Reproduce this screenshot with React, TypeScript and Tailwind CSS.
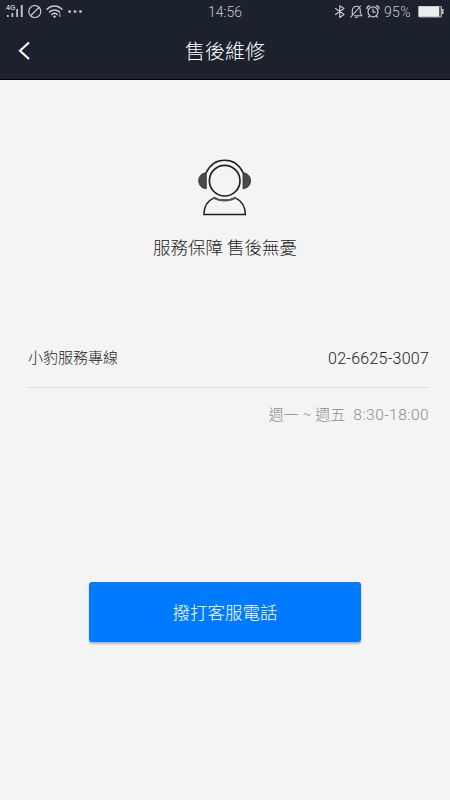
import type { ReactNode } from "react";

interface IconProps {
  className?: string;
  children?: ReactNode;
}

function Icon({ className, viewBox, children }: IconProps & { viewBox: string }) {
  return (
    <svg
      viewBox={viewBox}
      className={className}
      fill="none"
      stroke="currentColor"
      strokeLinecap="round"
      strokeLinejoin="round"
    >
      {children}
    </svg>
  );
}

function StatusBar() {
  return (
    <div className="grid h-6 grid-cols-3 items-center px-1.5 text-[#c6c8cc]">
      <div className="flex items-center">
        <div className="relative h-3.5 w-[17px]">
          <span className="absolute -top-px left-0 font-['Liberation_Sans'] text-[7px] leading-[8px] font-bold">
            4G
          </span>
          <svg viewBox="0 0 17 14" className="h-3.5 w-[17px]" fill="currentColor">
            <path d="M1 10h1.7v2H1zM5.5 8h1.7v4H5.5zM10.3 4h1.7v8h-1.7zM14.8 0h1.9v12h-1.9z" />
          </svg>
        </div>
        <Icon viewBox="0 0 14 14" className="ml-[5px] size-3.5">
          <circle cx="6.8" cy="6.5" r="6" strokeWidth="1.2" />
          <path d="M2.8 10.5 10.8 2.5" strokeWidth="1.2" />
        </Icon>
        <Icon viewBox="0 0 17 14" className="ml-[4px] h-3.5 w-[17px]">
          <path d="M1 4.2C5.2 0 11.8 0 16 4.2M3.6 6.9c2.8-2.7 7-2.7 9.8 0M6 9.4c1.4-1.4 3.6-1.4 5 0" strokeWidth="1.5" />
          <circle cx="8.5" cy="11.6" r=".8" fill="currentColor" />
          <path d="M13.8 9v2.6" strokeWidth="1" />
        </Icon>
        <svg viewBox="0 0 16 4" className="ml-[5px] h-1 w-4" fill="currentColor">
          <circle cx="1.6" cy="1.6" r="1.4" />
          <circle cx="7" cy="1.6" r="1.4" />
          <circle cx="12.5" cy="1.6" r="1.4" />
        </svg>
      </div>

      <span className="text-center font-[Roboto] text-[14px] leading-6 font-light">14:56</span>

      <div className="flex items-center justify-end">
        <Icon viewBox="0 0 12 14" className="h-3.5 w-3">
          <path d="m1.5 3.5 8.5 6-4.3 3V.7L10 3.5l-8.5 6" strokeWidth="1.1" />
        </Icon>
        <Icon viewBox="0 0 13 14" className="ml-1 h-3.5 w-[13px]">
          <path d="M2.3 10V5.8c0-2.6 1.6-4.5 4.2-4.5 2.4 0 3.8 1.9 3.8 4.5v2.5l1.7 2.4H4.5M5.3 12.3h2.4M.8 12.1 10.6 1" strokeWidth="1.1" />
        </Icon>
        <Icon viewBox="0 0 14 14" className="ml-[3px] size-3.5">
          <circle cx="7" cy="6.8" r="5" strokeWidth="1.2" />
          <path d="M7 4.1v3h2.2M1 3.7C1 2 2 .9 3.6.8M13 3.7C13 2 12 .9 10.4.8M3.5 10.9l-1 1.2M10.5 10.9l1 1.2" strokeWidth="1.2" />
        </Icon>
        <span className="ml-[4px] w-[29px] font-[Roboto] text-[14px] leading-6 font-light tracking-[0.3px]">
          95%
        </span>
        <svg viewBox="0 0 26 12" className="ml-[5px] h-3 w-[26px]">
          <rect x=".5" y="0" width="23" height="11" rx="1" fill="#ececec" stroke="#aaaaad" />
          <path d="M21 .5h2v10h-2z" fill="#55585f" />
          <path d="M24 3h1.5v5H24z" fill="#c6c8cc" />
        </svg>
      </div>
    </div>
  );
}

function SupportIcon() {
  return (
    <svg viewBox="0 0 54 58" className="h-[58px] w-[54px]" fill="none" stroke="#202020">
      <path d="M8 15C12 6.5 18.5 2.2 26.6 2.2S41.3 6.5 45.3 15" strokeWidth="1.6" />
      <circle cx="26.7" cy="22.7" r="15.3" strokeWidth="1.7" />
      <path d="M8.3 14.7v16C3.6 30.2 .7 27.1.7 22.7s2.9-7.5 7.6-8ZM45 14.7v16c4.7-.5 7.6-3.6 7.6-8s-2.9-7.5-7.6-8Z" fill="#4a4a4a" strokeWidth=".7" />
      <path d="M16 39.9C9 43 6 48.8 5.9 56.6h41.5C47.2 48.8 44.3 43 37.2 39.9c-6.2 3.2-15 3.2-21.2 0Z" strokeWidth="1.5" />
      <path d="M15.5 39.6c6.4 3.8 15.8 3.8 22.2 0" stroke="#555" strokeWidth="2" />
    </svg>
  );
}

export default function App() {
  return (
    <div className="flex h-[800px] w-[450px] flex-col bg-[#f4f4f4] font-['Noto_Sans_CJK_TC',sans-serif] font-light text-[#1c1c1c]">
      <header className="h-20 border-b border-black bg-[#1c212e]">
        <StatusBar />
        <div className="grid h-[53px] grid-cols-[50px_1fr_50px] items-center text-white">
          <button className="flex h-full items-center pl-[18px]" aria-label="返回">
            <svg viewBox="0 0 13 20" className="h-5 w-[13px]" fill="none" stroke="currentColor" strokeWidth="2.2">
              <path d="M11 1.5 2 9.7l9 8.3" />
            </svg>
          </button>
          <h1 className="text-center text-[20px] leading-[30px]">售後維修</h1>
        </div>
      </header>

      <main className="flex flex-1 flex-col items-center">
        <section className="flex flex-col items-center pt-[78px]">
          <SupportIcon />
          <p className="mt-[18px] text-[17.5px] leading-[26px]">服務保障 售後無憂</p>
        </section>

        <section className="mt-[67px] w-full pr-[21px] pl-[27px]">
          <div className="flex h-[61px] items-center justify-between border-b border-[#dcdcdc] text-[15px]">
            <span className="pl-px">小豹服務專線</span>
            <span className="pt-[3px] font-[Roboto] text-[16px] tracking-[0.25px]">02-6625-3007</span>
          </div>
          <p className="flex h-[52px] items-center justify-end gap-2 text-[15px] text-[#8c8c8c]">
            <span className="[word-spacing:1px]">週一 ~ 週五</span>
            <span className="pt-[3px] font-[Roboto] text-[15.5px] tracking-[0.45px]">8:30-18:00</span>
          </p>
        </section>

        <button className="mt-[142px] h-[60px] w-[272px] rounded-[3px] bg-[#007aff] text-[17.5px] text-white shadow-[0_2px_2px_rgba(0,0,0,0.25)]">
          撥打客服電話
        </button>
      </main>
    </div>
  );
}
